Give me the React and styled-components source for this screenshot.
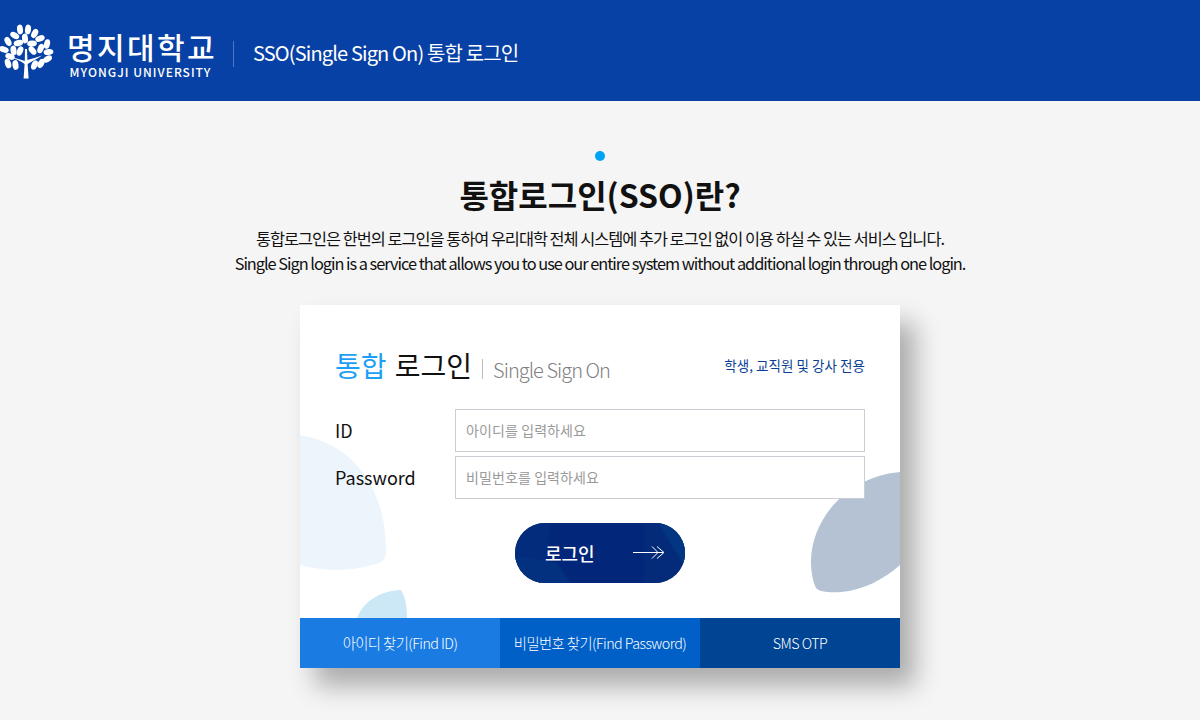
import React from "react";
import styled, { createGlobalStyle } from "styled-components";

const GlobalStyle = createGlobalStyle`
  html, body {
    margin: 0;
    padding: 0;
    background: #f5f5f5;
    font-family: "Noto Sans CJK KR", "Noto Sans", sans-serif;
    color: #111;
  }
  * { box-sizing: border-box; }
`;

// x, y, rotation of each leaf in the crown
const leaves = [
  [20, 29.5, -8], [28, 29.5, 8], [34.7, 33.5, 28], [14.7, 35.5, -58], [40, 38.5, 68],
  [8, 41.5, -28], [47, 44, 12], [4, 49.5, -72], [48.5, 52, 84],
  [25, 38.5, -8], [18.5, 43, 76], [32, 43.5, 86], [13.5, 50.5, -8], [20, 51, 22],
  [32.5, 50.5, -38], [40.7, 48.5, 22], [10, 56.5, -72], [47.5, 59, 58],
  [8, 63.5, -18], [15.5, 65, -8], [34.5, 65, 24], [41, 63.5, 28],
];

const TreeLogo = () => (
  <svg width="54" height="80" viewBox="0 0 54 80" aria-hidden="true">
    <g fill="#fff">
      {leaves.map(([x, y, r]) => (
        <ellipse key={`${x}-${y}`} cx={x} cy={y} rx="3" ry="4.9" transform={`rotate(${r} ${x} ${y})`} />
      ))}
      <path d="M23.6 78.5 L24.6 64 C21 61 16 59.5 11 57 C16 58.5 21 59.5 24.8 61 L25 49 L27 49 L27.4 60 C32 58.5 37 57.5 42 55.5 C37 59 32 61 27.6 64 L28.6 78.5 Z" />
    </g>
  </svg>
);

const LeafLeft = styled.svg`
  position: absolute;
  left: 0;
  top: 130px;
`;

const LeafBottom = styled.svg`
  position: absolute;
  left: 57px;
  top: 285px;
`;

const LeafRight = styled.svg`
  position: absolute;
  right: 0;
  top: 167px;
`;

const Header = styled.header`
  height: 101px;
  background: #0841a5;
  display: flex;
  align-items: flex-start;
`;

const Logo = styled.div`
  display: flex;
  align-items: flex-start;
  height: 101px;
`;

const LogoText = styled.div`
  display: flex;
  flex-direction: column;
  align-items: center;
  margin-left: 13px;
  margin-top: 28px;
  color: #fff;
`;

const LogoKo = styled.div`
  font-size: 30px;
  line-height: 36px;
  font-weight: 500;
  letter-spacing: 2.4px;
  white-space: nowrap;
`;

const LogoEn = styled.div`
  font-size: 12px;
  line-height: 14px;
  font-weight: 500;
  letter-spacing: 1px;
  white-space: nowrap;
  margin-top: 1px;
  padding-right: 3px;
`;

const Divider = styled.span`
  width: 1px;
  height: 26px;
  background: #4f78c0;
  margin: 41px 19px 0 16px;
`;

const SiteTitle = styled.div`
  margin-top: 36px;
  font-size: 20px;
  line-height: 34px;
  color: #fff;
  font-weight: 400;
  letter-spacing: -0.85px;
  white-space: nowrap;
`;

const Main = styled.main`
  display: flex;
  flex-direction: column;
  align-items: center;
  padding: 50px 0 52px;
`;

const Dot = styled.span`
  width: 10px;
  height: 10px;
  border-radius: 50%;
  background: #00a3f5;
`;

const Heading = styled.h1`
  margin: 7px 0 0;
  font-size: 32px;
  line-height: 52px;
  font-weight: 700;
  letter-spacing: 0;
  color: #111;
`;

const Intro = styled.p`
  margin: 6px 0 0;
  font-size: 16.35px;
  line-height: 25px;
  letter-spacing: -1.02px;
  font-weight: 400;
  text-align: center;
  color: #111;
`;

const CardShadow = styled.div`
  margin-top: 29px;
  box-shadow: 15px 18px 24px rgba(0, 0, 0, 0.3);
`;

const Card = styled.section`
  position: relative;
  overflow: hidden;
  width: 600px;
  height: 363px;
  background: #fff;
  display: flex;
  flex-direction: column;
`;

const CardBody = styled.div`
  position: relative;
  flex: 1;
  padding: 38px 35px 0;
`;

const TitleRow = styled.div`
  display: flex;
  align-items: center;
  height: 44px;
`;

const CardTitle = styled.h2`
  margin: 0;
  font-size: 28px;
  line-height: 44px;
  font-weight: 400;
  word-spacing: 2px;
  color: #111;
  white-space: nowrap;
`;

const Accent = styled.span`
  color: #1e9ff5;
`;

const TitleBar = styled.span`
  width: 1px;
  height: 20px;
  background: #bbb;
  margin: 8px 10px 0 10px;
`;

const SubTitle = styled.span`
  font-size: 20px;
  font-weight: 300;
  letter-spacing: -0.95px;
  color: #808080;
  margin-top: 8px;
  white-space: nowrap;
`;

const Target = styled.span`
  margin-left: auto;
  font-size: 13.5px;
  letter-spacing: 0.05px;
  color: #0a3f94;
  white-space: nowrap;
`;

const Fields = styled.div`
  display: flex;
  flex-direction: column;
  gap: 4px;
  margin-top: 22px;
`;

const Field = styled.label`
  display: flex;
  align-items: center;
`;

const FieldLabel = styled.span`
  width: 120px;
  font-size: 18px;
  line-height: 26px;
  color: #111;
  padding-bottom: 2px;
`;

const Input = styled.input`
  width: 410px;
  height: 43px;
  padding: 0 10px 2px;
  background: #fff;
  border: 1px solid #c9cdd4;
  border-radius: 0;
  outline: none;
  font-family: inherit;
  font-size: 14px;
  letter-spacing: 0.1px;
  color: #111;
  position: relative;
  &::placeholder {
    color: #9a9a9a;
    opacity: 1;
  }
`;

const LoginButton = styled.button`
  position: relative;
  overflow: hidden;
  display: flex;
  align-items: center;
  width: 170px;
  height: 60px;
  margin: 24px auto 0;
  padding: 0 20px 0 30px;
  border: 0;
  border-radius: 30px;
  background: #02277a;
  color: #fff;
  font-family: inherit;
  font-size: 18px;
  font-weight: 500;
`;

const ButtonFacets = styled.svg`
  position: absolute;
  inset: 0;
`;

const ButtonLabel = styled.span`
  position: relative;
`;

const Arrow = styled.svg`
  position: relative;
  margin-left: auto;
`;

const Footer = styled.nav`
  position: relative;
  display: grid;
  grid-template-columns: repeat(3, 200px);
  height: 50px;
`;

const FooterLink = styled.a`
  display: flex;
  align-items: center;
  justify-content: center;
  padding-bottom: 2px;
  background: ${(p) => p.$bg};
  color: #fff;
  font-size: 14.3px;
  font-weight: 300;
  letter-spacing: -0.55px;
  white-space: nowrap;
`;

const App = () => (
  <>
    <GlobalStyle />
    <Header>
      <Logo>
        <TreeLogo />
        <LogoText>
          <LogoKo>명지대학교</LogoKo>
          <LogoEn>MYONGJI UNIVERSITY</LogoEn>
        </LogoText>
      </Logo>
      <Divider />
      <SiteTitle>SSO(Single Sign On) 통합 로그인</SiteTitle>
    </Header>
    <Main>
      <Dot />
      <Heading>통합로그인(SSO)란?</Heading>
      <Intro>
        통합로그인은 한번의 로그인을 통하여 우리대학 전체 시스템에 추가 로그인 없이 이용 하실 수 있는 서비스 입니다.
        <br />
        Single Sign login is a service that allows you to use our entire system without additional login through one login.
      </Intro>
      <CardShadow>
        <Card>
          <LeafLeft width="87" height="136" viewBox="0 0 87 136">
            <path d="M0 0 C50 8 87 50 86 118 C85 126 80 128 72 130 C48 137 22 136 0 130 Z" fill="#edf5fc" />
          </LeafLeft>
          <LeafBottom width="50" height="28" viewBox="0 0 50 28">
            <path d="M0 28 C6 12 22 1 44 0 C48 6 50 16 50 28 Z" fill="#cce8f7" />
          </LeafBottom>
          <LeafRight width="89" height="121" viewBox="0 0 89 121">
            <path d="M89 0 C35 5 0 48 0 90 C0 100 2 110 5 116 C8 120 20 121 30 120 C52 118 72 108 89 93 Z" fill="#b4c2d4" />
          </LeafRight>
          <CardBody>
            <TitleRow>
              <CardTitle>
                <Accent>통합</Accent> 로그인
              </CardTitle>
              <TitleBar />
              <SubTitle>Single Sign On</SubTitle>
              <Target>학생, 교직원 및 강사 전용</Target>
            </TitleRow>
            <Fields>
              <Field>
                <FieldLabel>ID</FieldLabel>
                <Input placeholder="아이디를 입력하세요" />
              </Field>
              <Field>
                <FieldLabel>Password</FieldLabel>
                <Input type="password" placeholder="비밀번호를 입력하세요" />
              </Field>
            </Fields>
            <LoginButton type="button">
              <ButtonFacets width="170" height="60" viewBox="0 0 170 60">
                <path d="M0 0 H36 L26 60 H0 Z" fill="#032c7c" />
                <path d="M0 32 L42 40 L56 60 H0 Z" fill="#033180" />
                <path d="M129 0 H170 V60 H129 Z" fill="#032b79" />
                <path d="M143 0 H170 V44 Z" fill="#033682" />
              </ButtonFacets>
              <ButtonLabel>로그인</ButtonLabel>
              <Arrow width="32" height="14" viewBox="0 0 32 14" fill="none" stroke="#fff" strokeWidth="1">
                <path d="M0 6.5 H30" />
                <path d="M19 0.5 L25 6.5 L19 12.5" />
                <path d="M24 0.5 L31 6.5 L24 12.5" />
              </Arrow>
            </LoginButton>
          </CardBody>
          <Footer>
            <FooterLink $bg="#1a7be3">아이디 찾기(Find ID)</FooterLink>
            <FooterLink $bg="#0060c8">비밀번호 찾기(Find Password)</FooterLink>
            <FooterLink $bg="#004494">SMS OTP</FooterLink>
          </Footer>
        </Card>
      </CardShadow>
    </Main>
  </>
);

export default App;
